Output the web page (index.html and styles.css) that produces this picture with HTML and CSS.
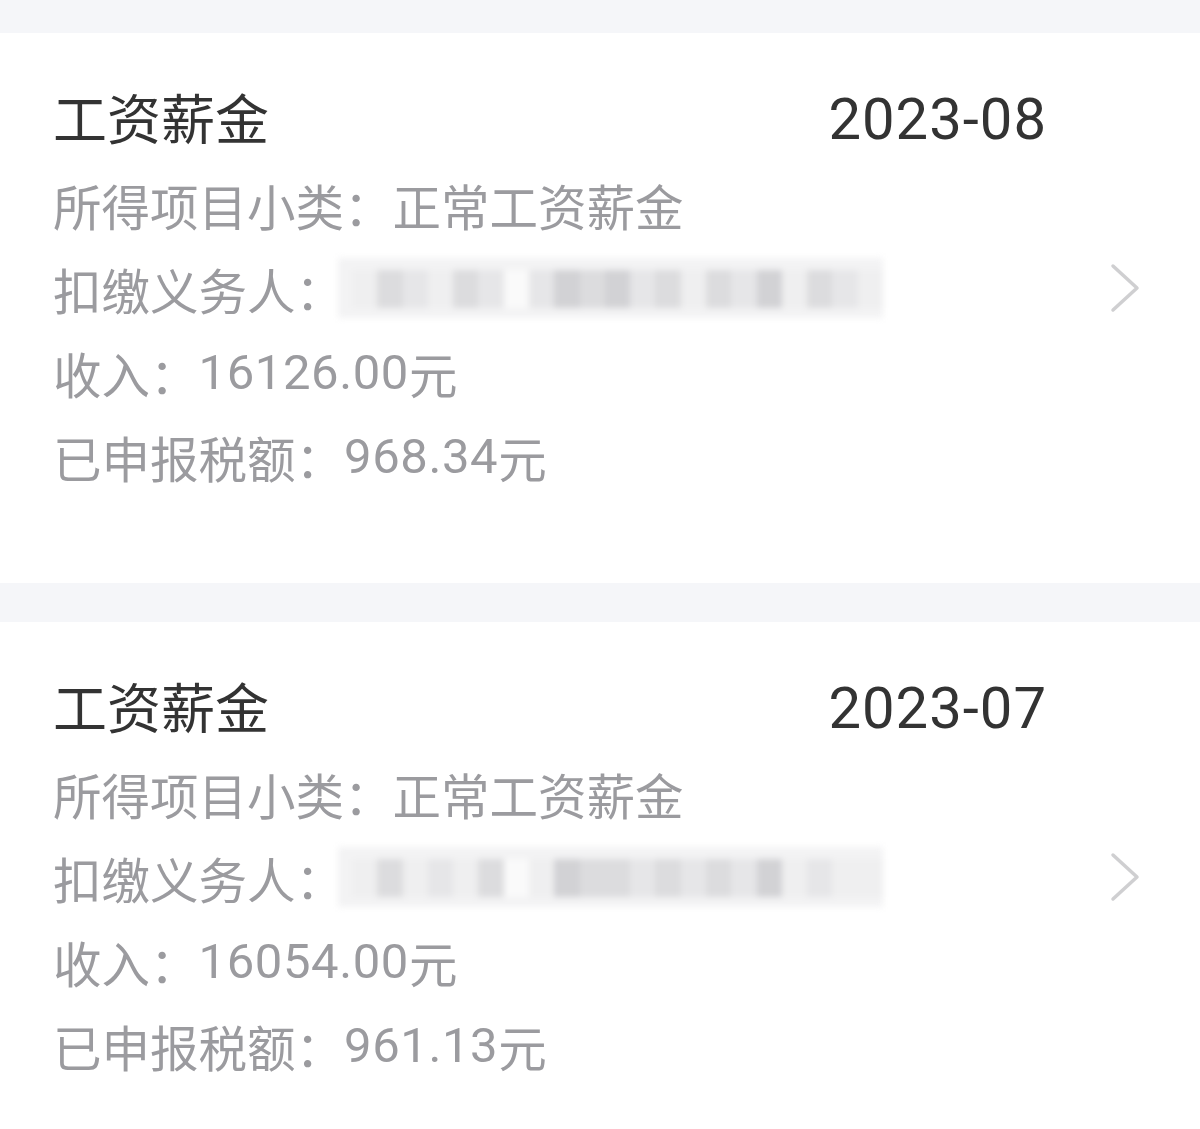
FILE: index.html
```html
<!DOCTYPE html>
<html lang="zh-CN">
<head>
<meta charset="utf-8">
<link rel="stylesheet" href="styles.css">
</head>
<body>
<div class="page">
  <div class="band band-top"></div>
  <div class="card">
    <div class="content">
      <div class="title-row">
        <span class="title">工资薪金</span>
        <span class="date">2023-08</span>
      </div>
      <div class="row">所得项目小类：正常工资薪金</div>
      <div class="row">扣缴义务人：<span class="mosaic">
        <i class="c1"></i><i class="c3"></i><i class="c2"></i><i class="c1"></i><i class="c3"></i><i class="c2"></i><i class="c0"></i><i class="c2"></i><i class="c4"></i><i class="c3"></i><i class="c4"></i><i class="c2"></i><i class="c3"></i><i class="c1"></i><i class="c3"></i><i class="c2"></i><i class="c4"></i><i class="c1"></i><i class="c3"></i><i class="c2"></i><i class="c1"></i>
      </span></div>
      <div class="row">收入：<span class="num">16126.00</span>元</div>
      <div class="row">已申报税额：<span class="num">968.34</span>元</div>
    </div>
    <svg class="chevron" width="34" height="52" viewBox="0 0 34 52"><path d="M4 4 L28 26 L4 48" fill="none" stroke="#cfcfd1" stroke-width="3.5" stroke-linecap="round" stroke-linejoin="round"/></svg>
  </div>
  <div class="band band-mid"></div>
  <div class="card">
    <div class="content">
      <div class="title-row">
        <span class="title">工资薪金</span>
        <span class="date">2023-07</span>
      </div>
      <div class="row">所得项目小类：正常工资薪金</div>
      <div class="row">扣缴义务人：<span class="mosaic">
        <i class="c1"></i><i class="c3"></i><i class="c1"></i><i class="c2"></i><i class="c1"></i><i class="c3"></i><i class="c0"></i><i class="c1"></i><i class="c4"></i><i class="c3"></i><i class="c3"></i><i class="c2"></i><i class="c3"></i><i class="c2"></i><i class="c3"></i><i class="c2"></i><i class="c4"></i><i class="c1"></i><i class="c2"></i><i class="c1"></i><i class="c1"></i>
      </span></div>
      <div class="row">收入：<span class="num">16054.00</span>元</div>
      <div class="row">已申报税额：<span class="num">961.13</span>元</div>
    </div>
    <svg class="chevron" width="34" height="52" viewBox="0 0 34 52"><path d="M4 4 L28 26 L4 48" fill="none" stroke="#cfcfd1" stroke-width="3.5" stroke-linecap="round" stroke-linejoin="round"/></svg>
  </div>
</div>
</body>
</html>
```
FILE: styles.css
```css
html, body {
  margin: 0;
  padding: 0;
  background: #ffffff;
}
.page {
  width: 1200px;
  height: 1129px;
  overflow: hidden;
  font-family: "Noto Sans CJK SC", "Noto Sans", sans-serif;
}
.band {
  background: #f5f6f9;
}
.band-top {
  height: 33px;
}
.band-mid {
  height: 39px;
}
.card {
  background: #ffffff;
  display: flex;
  align-items: center;
  padding: 38px 57px 84px 53px;
}
.content {
  flex: 1;
  padding-right: 62px;
}
.title-row {
  display: flex;
  justify-content: space-between;
  align-items: center;
  height: 92px;
}
.title {
  font-size: 54px;
  color: #333333;
  line-height: 92px;
}
.date {
  font-family: Roboto, "Noto Sans", sans-serif;
  font-size: 58px;
  letter-spacing: 1px;
  color: #333333;
  line-height: 92px;
  margin-top: 4px;
}
.row {
  font-size: 48.5px;
  line-height: 84px;
  height: 84px;
  color: #9b9b9f;
  display: flex;
  align-items: center;
  white-space: nowrap;
}
.num {
  font-family: Roboto, "Noto Sans", sans-serif;
  font-size: 49px;
  letter-spacing: 0.6px;
}
.mosaic {
  display: flex;
  align-items: stretch;
  width: 545px;
  height: 60px;
  margin-left: -6px;
  margin-top: -2px;
  filter: blur(3px);
  background: #f3f3f4;
  padding: 12px 0 10px 14px;
  box-sizing: border-box;
}
.mosaic i {
  flex: 1;
  display: block;
}
.c0 { background: #fafafa; }
.c1 { background: #efeff0; }
.c2 { background: #e6e6e8; }
.c3 { background: #dcdcde; }
.c4 { background: #d2d2d5; }
.chevron {
  flex: none;
  display: block;
  margin-top: 6px;
}
```
